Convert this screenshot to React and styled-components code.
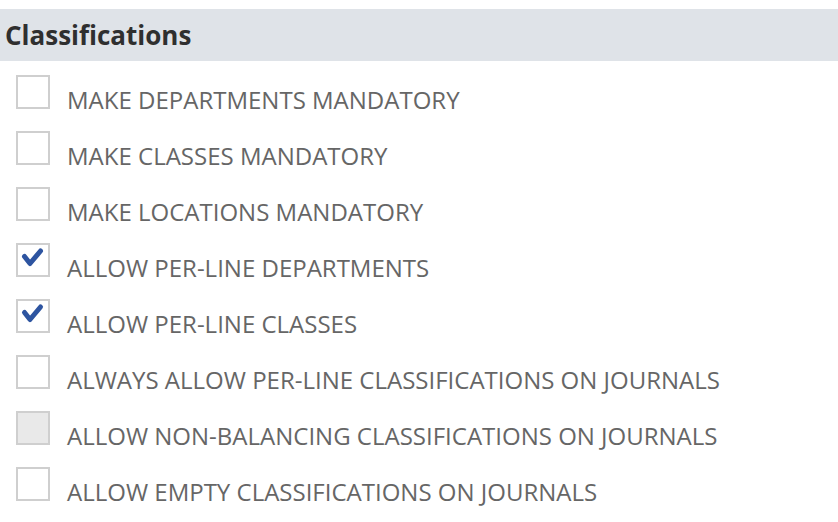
import styled, { createGlobalStyle } from "styled-components";

const GlobalStyle = createGlobalStyle`
  body {
    margin: 0;
    background: #fff;
    font-family: "Open Sans", "Liberation Sans", sans-serif;
  }
`;

const Panel = styled.div`
  padding-top: 9px;
`;

const Header = styled.div`
  height: 52px;
  background: #dfe3e8;
  display: flex;
  align-items: center;
  padding-left: 5px;
  font-size: 26px;
  font-weight: 700;
  color: #2f2f2f;
`;

const List = styled.div`
  display: flex;
  flex-direction: column;
  padding-top: 14px;
`;

const Row = styled.label`
  display: flex;
  align-items: flex-start;
  height: 56px;
  padding-left: 16px;
`;

const Box = styled.span`
  box-sizing: border-box;
  width: 34px;
  height: 34px;
  border: 2px solid #cfcfcf;
  background: ${(p) => (p.disabled ? "#e9e9e9" : "#fff")};
  display: flex;
  flex-shrink: 0;
`;

const Text = styled.span`
  margin-left: 17px;
  margin-top: 11px;
  font-size: 24px;
  line-height: 28px;
  color: #666;
`;

const Check = () => (
  <svg width="30" height="30" viewBox="0 0 30 30">
    <path
      d="M6.5 11.5 L12 18.5 L22.5 6"
      fill="none"
      stroke="#2d54a0"
      strokeWidth="5"
      strokeLinecap="round"
      strokeLinejoin="round"
    />
  </svg>
);

const items = [
  { label: "MAKE DEPARTMENTS MANDATORY" },
  { label: "MAKE CLASSES MANDATORY" },
  { label: "MAKE LOCATIONS MANDATORY" },
  { label: "ALLOW PER-LINE DEPARTMENTS", checked: true },
  { label: "ALLOW PER-LINE CLASSES", checked: true },
  { label: "ALWAYS ALLOW PER-LINE CLASSIFICATIONS ON JOURNALS" },
  { label: "ALLOW NON-BALANCING CLASSIFICATIONS ON JOURNALS", disabled: true },
  { label: "ALLOW EMPTY CLASSIFICATIONS ON JOURNALS" },
];

export default function App() {
  return (
    <>
      <GlobalStyle />
      <Panel>
        <Header>Classifications</Header>
        <List>
          {items.map((item) => (
            <Row key={item.label}>
              <Box disabled={item.disabled}>{item.checked && <Check />}</Box>
              <Text>{item.label}</Text>
            </Row>
          ))}
        </List>
      </Panel>
    </>
  );
}
